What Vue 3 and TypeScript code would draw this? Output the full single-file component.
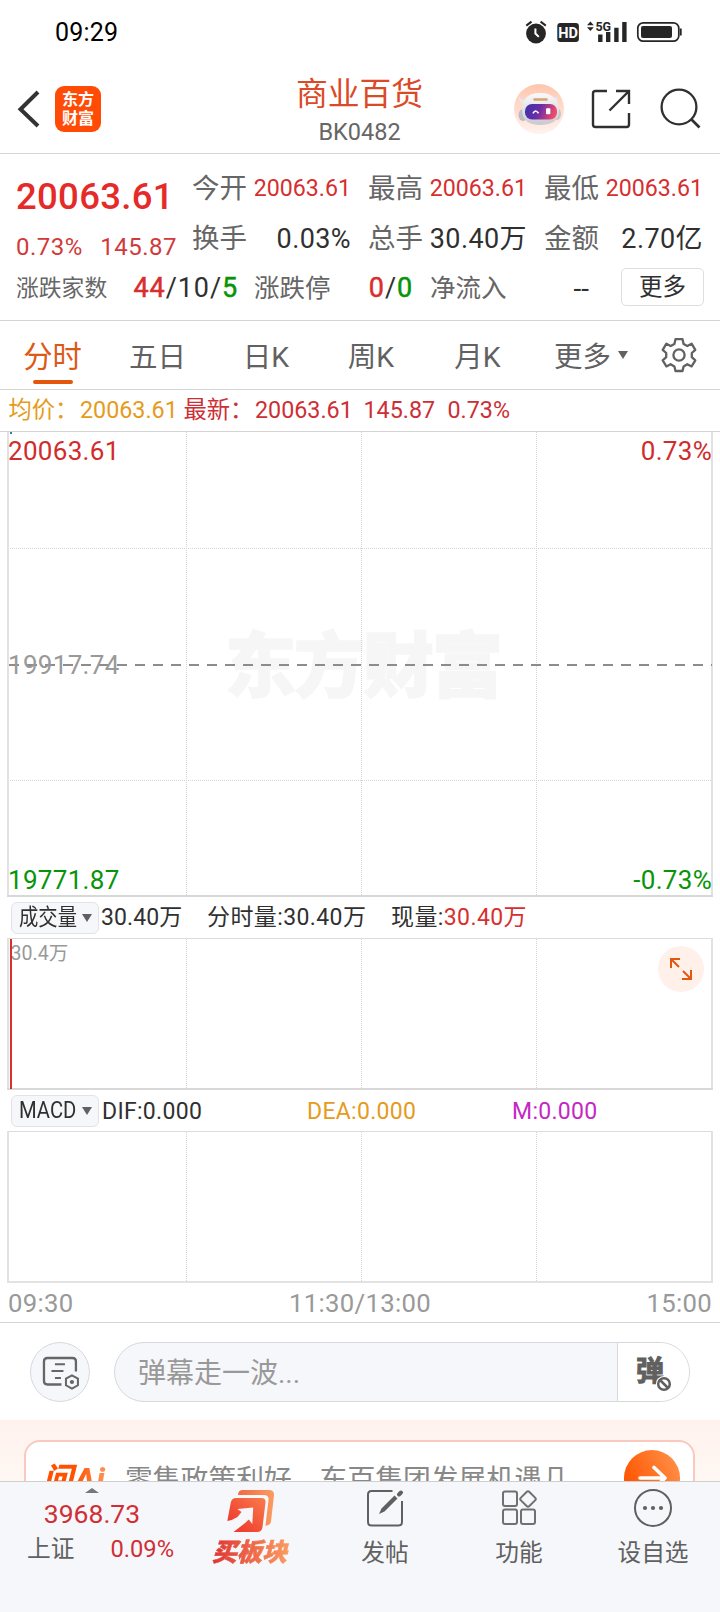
<script setup lang="ts">
interface Cell { label: string; value: string; red?: boolean }

const cells: Cell[] = [
  { label: '今开', value: '20063.61', red: true },
  { label: '最高', value: '20063.61', red: true },
  { label: '最低', value: '20063.61', red: true },
  { label: '换手', value: '0.03%' },
  { label: '总手', value: '30.40万' },
  { label: '金额', value: '2.70亿' },
]
const tabs: string[] = ['分时', '五日', '日K', '周K', '月K']
const columns: number[] = [186.5, 361.5, 536.5]
</script>

<template>
  <div class="page">
    <div class="status">
      <span class="clock">09:29</span>
      <svg class="status-icons" viewBox="520 16 170 32" width="170" height="32">
        <circle cx="536" cy="33.5" r="9.9" fill="#262626" />
        <path d="M526.3 25.6l5.2-4M540.6 21.6l5.2 4" stroke="#262626" stroke-width="2" fill="none" />
        <path d="M535.4 28.5v5l3.4 3.4" stroke="#fff" stroke-width="2" fill="none" />
        <rect x="557.3" y="23" width="21.6" height="19" rx="3" fill="#262626" />
        <text x="568.1" y="38.2" class="hd" text-anchor="middle">HD</text>
        <path d="M587 25.3l3.4-3.8 3.4 3.8zM587 27.2l3.4 3.8 3.4-3.8z" fill="#262626" />
        <text x="595.4" y="30.8" class="five-g">5G</text>
        <path d="M600.3 34.5V42M608.2 32V42M616.4 27.8V42M624.4 22V42" stroke="#262626" stroke-width="4.4" />
        <rect x="637.8" y="22.8" width="41" height="18.4" rx="5.5" fill="none" stroke="#262626" stroke-width="1.7" />
        <rect x="641" y="26" width="31" height="12" rx="2" fill="#262626" />
        <path d="M680.8 28.5v7" stroke="#262626" stroke-width="1.8" />
      </svg>
    </div>

    <header class="header">
      <div class="head-left">
        <svg class="back" viewBox="16 86 26 46" width="26" height="46">
          <path d="M38 92L20.5 109.3 38 126" fill="none" stroke="#333" stroke-width="4" />
        </svg>
        <div class="logo"><span>东方</span><span>财富</span></div>
      </div>
      <div class="title">
        <h1>商业百货</h1>
        <p>BK0482</p>
      </div>
      <svg class="head-icons" viewBox="510 80 210 56" width="210" height="56">
        <defs>
          <linearGradient id="avatarBg" x1="0" y1="0" x2="0" y2="1">
            <stop offset="0" stop-color="#ffc5ad" /><stop offset="1" stop-color="#fff3ee" />
          </linearGradient>
          <linearGradient id="visor" x1="0" y1="0" x2="1" y2="0.2">
            <stop offset="0" stop-color="#3a32a8" /><stop offset=".5" stop-color="#6a2ca8" /><stop offset="1" stop-color="#ee4a6c" />
          </linearGradient>
          <linearGradient id="helmet" x1="0" y1="0" x2="0" y2="1">
            <stop offset="0" stop-color="#fafafc" /><stop offset="1" stop-color="#c9c8d0" />
          </linearGradient>
        </defs>
        <circle cx="539" cy="109" r="25" fill="url(#avatarBg)" />
        <path d="M525 105q-7-2-6-9 2 5 9 4zM553 104q7-2 4-9-1 5-8 4z" fill="#ebe5e8" />
        <ellipse cx="523" cy="115" rx="4.5" ry="6" fill="#bdbac4" />
        <ellipse cx="557" cy="114" rx="4" ry="6" fill="#c9c5cd" />
        <path d="M522 110Q522 93 540 93 558 93 559 110 560 124 541 125 522 125 522 110Z" fill="url(#helmet)" />
        <path d="M534.500 99.500h12" stroke="#d9a070" stroke-width="2.400" stroke-linecap="round" />
        <rect x="525" y="104" width="32" height="15.5" rx="7" fill="url(#visor)" />
        <path d="M533 113.3q2.5-4.5 5.5 0" stroke="#fff" stroke-width="1.6" fill="none" />
        <rect x="546" y="108.3" width="4.4" height="6" rx="1" fill="#fff" />
        <g fill="none" stroke="#303030" stroke-width="2.4">
          <path d="M607 91H595.5Q593 91 593 93.500V124.500Q593 127 595.500 127H626.500Q629 127 629 124.500V113" />
          <path d="M616 91H629V104M628.500 91.500L609.500 110.500" />
          <circle cx="679" cy="107" r="17.400" stroke-width="2.300" />
          <path d="M691.500 119.500L699.500 127.500" stroke-width="2.600" />
        </g>
      </svg>
    </header>

    <section class="quote">
      <div class="quote-top">
        <div class="price">
          <strong>20063.61</strong>
          <div class="delta"><span>0.73%</span><span>145.87</span></div>
        </div>
        <div class="cells">
          <div v-for="c in cells" :key="c.label" class="cell">
            <span class="label">{{ c.label }}</span>
            <span :class="['value', { up: c.red }]">{{ c.value }}</span>
          </div>
        </div>
      </div>
      <div class="quote-row">
        <div class="stat breadth"><span class="small">涨跌家数</span><span class="num"><b class="up">44</b>/10/<b class="down">5</b></span></div>
        <div class="stat limit"><span>涨跌停</span><span class="num"><b class="up">0</b>/<b class="down">0</b></span></div>
        <div class="stat inflow"><span>净流入</span><span class="dash">--</span></div>
        <button class="more">更多</button>
      </div>
    </section>

    <nav class="tabs">
      <span v-for="(t, i) in tabs" :key="t" :class="['tab', { active: i === 0 }]">{{ t }}</span>
      <span class="tab tab-more">更多<i class="caret"></i></span>
      <svg class="gear" viewBox="660 336 38 38" width="38" height="38" fill="none" stroke="#616161" stroke-width="2.3" stroke-linejoin="round">
        <path d="M675.500 339.200h7l1.100 4.700 3.700 2.100 4.300-2.300 3.700 6.100-3.500 3.200v4.200l3.500 3.200-3.700 6-4.300-2.200-3.700 2.200-1.100 4.600h-7l-1.100-4.600-3.700-2.200-4.300 2.200-3.700-6 3.500-3.200v-4.200l-3.500-3.200 3.700-6.100 4.300 2.300 3.700-2.100z" />
        <circle cx="679" cy="355" r="5.600" />
      </svg>
    </nav>

    <div class="legend">
      <span class="avg">均价：</span><span class="avg">20063.61</span>
      <span>最新：</span><span>20063.61</span><span>145.87</span><span>0.73%</span>
    </div>

    <svg class="chart" viewBox="0 432 720 465" width="720" height="465">
      <text x="225" y="691" class="watermark" textLength="278">东方财富</text>
      <path d="M8 548.5H712M8 780.5H712" class="grid" />
      <path v-for="x in columns" :key="x" :d="`M${x} 432V895`" class="grid" />
      <path d="M8 432V896M712 432V896" class="frame" />
      <path d="M7 896H713" class="frame base" />
      <path d="M9 665H712" class="prev-close" />
      <rect x="10" y="432" width="2" height="2" fill="#3f74b0" />
      <text x="8" y="460" class="axis up-text">20063.61</text>
      <text x="712" y="460" class="axis up-text" text-anchor="end">0.73%</text>
      <text x="8" y="674" class="axis mid-text">19917.74</text>
      <text x="8" y="889" class="axis down-text">19771.87</text>
      <text x="712" y="889" class="axis down-text" text-anchor="end">-0.73%</text>
    </svg>

    <div class="indicator volume">
      <button class="chip"><span>成交量</span><i class="caret"></i></button>
      <span>30.40万</span><span>分时量:30.40万</span><span>现量:<em>30.40万</em></span>
    </div>

    <svg class="chart" viewBox="0 938 720 153" width="720" height="153">
      <path d="M7 938.5H713" class="thin" />
      <path v-for="x in columns" :key="x" :d="`M${x} 939V1089`" class="grid" />
      <path d="M8 938V1089M712 938V1089" class="frame" />
      <path d="M7 1089H713" class="frame base" />
      <text x="10.500" y="960" class="peak">30.4万</text>
      <path d="M11 939V1089" stroke="#d9302f" stroke-width="2" />
      <circle cx="681" cy="969" r="23" fill="#fff0e9" />
      <g fill="none" stroke="#e2580f" stroke-width="2">
        <path d="M680 959H671V968M671.500 959.500L679 967" />
        <path d="M682 979H691V970M690.500 978.500L683 971" />
      </g>
    </svg>

    <div class="indicator macd">
      <button class="chip"><span>MACD</span><i class="caret"></i></button>
      <span>DIF:0.000</span><span class="avg">DEA:0.000</span><span class="magenta">M:0.000</span>
    </div>

    <svg class="chart" viewBox="0 1131 720 153" width="720" height="153">
      <path d="M7 1131.500H713" class="thin" />
      <path v-for="x in columns" :key="x" :d="`M${x} 1132V1282`" class="grid" />
      <path d="M8 1131V1282M712 1131V1282" class="frame" />
      <path d="M7 1282H713" class="frame" />
    </svg>

    <div class="times"><span>09:30</span><span>11:30/13:00</span><span>15:00</span></div>

    <div class="danmu">
      <svg viewBox="29 1341 62 62" width="62" height="62">
        <circle cx="60" cy="1372" r="29.500" fill="#f6f7fa" stroke="#d6d8de" />
        <g fill="none" stroke="#666" stroke-width="2.300">
          <path d="M61.500 1384.500H47.500Q44 1384.500 44 1381V1361.500Q44 1358 47.500 1358H72.500Q76 1358 76 1361.500V1371.500" />
          <path d="M55 1364.300H65M51.500 1371H63.500M55 1378H61" stroke-width="2" />
          <path d="M72 1375.300L78 1378.700V1385.300L72 1388.700 66 1385.300V1378.700Z" stroke-width="2" />
        </g>
        <circle cx="72" cy="1382" r="2.100" fill="#666" />
      </svg>
      <div class="pill">
        <span class="placeholder">弹幕走一波...</span>
        <div class="toggle">
          <b>弹</b>
          <svg viewBox="656 1374 18 18" width="18" height="18">
            <circle cx="665" cy="1383" r="8" fill="#fff" />
            <circle cx="665" cy="1383" r="5.800" fill="none" stroke="#606060" stroke-width="2.500" />
            <path d="M661 1379L669 1387" stroke="#606060" stroke-width="2.500" />
          </svg>
        </div>
      </div>
    </div>

    <section class="ask">
      <div class="ask-card">
        <span class="ask-logo">问Ai</span>
        <span class="ask-text">零售政策利好，东百集团发展机遇几</span>
        <svg class="go" viewBox="624 1450 56 56" width="56" height="56">
          <defs>
            <linearGradient id="goFill" x1="0" y1="0.500" x2="1" y2="0">
              <stop offset="0" stop-color="#ff5500" /><stop offset="1" stop-color="#ff9650" />
            </linearGradient>
          </defs>
          <circle cx="652" cy="1478" r="28" fill="url(#goFill)" />
          <path d="M640 1478H665M654 1467.500L665 1478 654 1488.500" fill="none" stroke="#fff" stroke-width="3.600" stroke-linecap="round" stroke-linejoin="round" />
        </svg>
      </div>
    </section>

    <footer class="bottom">
      <div class="index">
        <i class="up-caret"></i>
        <span class="index-value">3968.73</span>
        <div class="index-row"><span>上证</span><span class="index-pct">0.09%</span></div>
      </div>
      <div class="action buy">
        <svg viewBox="226 1489 50 44" width="50" height="44">
          <defs>
            <linearGradient id="buyFront" x1="0" y1="1" x2="1" y2="0">
              <stop offset="0" stop-color="#ee2f28" /><stop offset="1" stop-color="#f87c4c" />
            </linearGradient>
            <linearGradient id="buyBack" x1="0" y1="0" x2="1" y2="0">
              <stop offset="0" stop-color="#f26743" /><stop offset="1" stop-color="#fb9c60" />
            </linearGradient>
          </defs>
          <path d="M238 1495L238.500 1492.500Q239.300 1490 242 1490H269Q274.500 1490 274 1495.500L271 1521.500Q270.500 1525.500 265.500 1525.700L268.500 1500Q269 1495 264 1495Z" fill="url(#buyBack)" />
          <path d="M236 1498H261.500Q266 1498 265.500 1502.500L262.500 1527Q262 1532 257 1532H233.500L244.500 1523.500 248.800 1519.500 252.300 1524 253.200 1507.500 237.500 1509 241.500 1512 237.500 1517Q233 1520 227.300 1521L230.800 1502.500Q231.700 1498 236 1498Z" fill="url(#buyFront)" />
        </svg>
        <span>买板块</span>
      </div>
      <div class="action post">
        <svg viewBox="360 1489 50 44" width="50" height="44" fill="none" stroke="#606060" stroke-width="2">
          <path d="M392.500 1491H371.500Q368 1491 368 1494.500V1522Q368 1525.500 371.500 1525.500H398.500Q402 1525.500 402 1522V1501" />
          <path d="M379 1514L381.500 1508.500 394.500 1495.500 397.500 1498.500 384.500 1511.500Z" fill="#606060" stroke="none" />
          <path d="M399 1494.500L401 1492.500" stroke-width="4" stroke-linecap="round" />
        </svg>
        <span>发帖</span>
      </div>
      <div class="action tools">
        <svg viewBox="494 1489 50 44" width="50" height="44" fill="none" stroke="#707070" stroke-width="2">
          <rect x="503" y="1491.500" width="14" height="14.500" rx="2" />
          <rect x="503" y="1509.500" width="14" height="14.500" rx="2" />
          <rect x="521" y="1509.500" width="14" height="14.500" rx="2" />
          <rect x="522" y="1493" width="12" height="12" rx="2" transform="rotate(45 528 1499)" />
        </svg>
        <span>功能</span>
      </div>
      <div class="action watch">
        <svg viewBox="628 1489 50 44" width="50" height="44">
          <circle cx="653" cy="1508" r="18" fill="none" stroke="#606060" stroke-width="2" />
          <circle cx="645" cy="1508" r="2.100" fill="#606060" /><circle cx="653" cy="1508" r="2.100" fill="#606060" /><circle cx="661" cy="1508" r="2.100" fill="#606060" />
        </svg>
        <span>设自选</span>
      </div>
    </footer>
  </div>
</template>

<style>
html, body { margin: 0; background: #fff; }
</style>

<style scoped>
* { box-sizing: border-box; }
.page { width: 720px; height: 1612px; overflow: hidden; display: flex; flex-direction: column; background: #fff; color: #303030; font-family: Roboto, "Noto Sans CJK SC", sans-serif; font-size: 23px; white-space: nowrap; }
.page > * { flex: none; }
svg { display: block; }
button { font-family: inherit; padding: 0; margin: 0; color: inherit; }
.up { color: #d72f2f; }
.down { color: #089408; }
.avg { color: #e59b1c; }
.magenta { color: #c428c4; }

.status { height: 64px; padding: 16px 30px 0 55px; display: flex; justify-content: space-between; }
.clock { font-size: 25px; line-height: 34px; color: #000; letter-spacing: .2px; }
.hd { font: 700 14.5px Roboto, sans-serif; fill: #fff; }
.five-g { font: 700 12.5px Roboto, sans-serif; fill: #262626; }

.header { height: 90px; border-bottom: 1px solid #d4d4d4; display: grid; grid-template-columns: 210px 299px 211px; }
.head-left { display: flex; padding: 22px 0 0 16px; }
.logo { width: 46px; height: 46px; margin-left: 13px; border-radius: 9px; background: #ff4b05; color: #fff; font: 700 16px/19px "Noto Sans CJK SC", sans-serif; display: flex; flex-direction: column; align-items: center; padding-top: 3px; }
.title { text-align: center; }
.title h1 { margin: 10px 0 0; font-size: 31.800px; line-height: 40px; font-weight: 400; color: #db4a27; }
.title p { margin: 3px 0 0; font-size: 23.500px; line-height: 30px; color: #666; }
.head-icons { margin: 16px 0 0 1px; }

.quote { height: 167px; border-bottom: 1px solid #d4d4d4; }
.quote-top { display: flex; padding-left: 16px; height: 114px; }
.price { width: 176px; padding-top: 20px; }
.price strong { display: block; font-size: 36.500px; line-height: 46px; font-weight: 500; letter-spacing: .3px; color: #e52a2a; }
.delta { display: flex; justify-content: space-between; width: 161px; margin-top: 10px; font-size: 24px; line-height: 34px; letter-spacing: .5px; color: #d13a3a; }
.cells { display: grid; grid-template-columns: 159px 159px 159px; column-gap: 17px; grid-template-rows: 50px 50px; padding-top: 9px; }
.cell { display: flex; justify-content: space-between; align-items: center; line-height: 50px; }
.label { font-size: 27.500px; color: #666; position: relative; top: 1px; }
.value { font-size: 27px; letter-spacing: .4px; padding-top: 1px; }
.value.up { font-size: 23.200px; letter-spacing: 0; padding-top: 0; }
.quote-row { display: flex; height: 38px; line-height: 41px; padding-left: 16px; font-size: 25.500px; color: #666; }
.stat { display: flex; justify-content: space-between; }
.breadth { width: 222px; }
.limit { width: 159px; margin-left: 16px; }
.inflow { width: 159px; margin-left: 17px; }
.small { font-size: 22.800px; }
.num { color: #303030; font-size: 27px; letter-spacing: .9px; }
.num b { font-weight: 400; -webkit-text-stroke: .5px currentColor; }
.dash { color: #303030; font-size: 28px; }
.more { width: 83px; height: 38px; margin-left: 32px; border: 1px solid #dedede; border-radius: 5px; background: #fff; color: #303030; font-size: 23.500px; line-height: 36px; }

.tabs { height: 69px; border-bottom: 1px solid #d4d4d4; display: grid; grid-template-columns: 105px 105px 112px 98px 115px 125px 60px; font-size: 28.500px; color: #616161; }
.tab { position: relative; line-height: 73px; text-align: center; }
.tab.active { color: #dd5a16; font-size: 29.300px; }
.tab.active::after { content: ""; position: absolute; left: 33px; top: 59px; width: 40px; height: 4px; border-radius: 2px; background: #e4560b; }
.tab-more { display: flex; align-items: center; justify-content: flex-start; padding-left: 19px; }
.caret { display: inline-block; width: 0; height: 0; border: 5px solid transparent; border-top: 8px solid #616161; border-bottom: 0; }
.tab-more .caret { margin: 0 0 6px 7px; }
.gear { margin-top: 15px; }

.legend { height: 42px; border-bottom: 1px solid #d4d4d4; padding-left: 8.500px; display: grid; grid-template-columns: 71.500px 103.500px 71.500px 108.500px 84px auto; font-size: 23.300px; line-height: 41px; color: #cd2f35; }

.chart text { font-family: Roboto, "Noto Sans CJK SC", sans-serif; }
.grid { stroke: #d4d4d4; stroke-width: 1; stroke-dasharray: 1 1; fill: none; }
.frame { stroke: #e2e2e2; stroke-width: 2; fill: none; }
.frame.base { stroke: #d8d8d8; }
.thin { stroke: #dcdcdc; stroke-width: 1; }
.prev-close { stroke: #8c8c8c; stroke-width: 1.800; stroke-dasharray: 10 8; }
.axis { font-size: 26px; letter-spacing: .3px; }
.up-text { fill: #d02c2c; }
.mid-text { fill: #999; }
.down-text { fill: #089408; }
.peak { font-size: 19.600px; fill: #999; }
.chart .watermark { font-family: "Noto Sans CJK SC", sans-serif; font-weight: 900; font-size: 71px; fill: #f6f6f6; stroke: #f6f6f6; stroke-width: 1.500; }

.indicator { display: grid; line-height: 42px; padding-left: 11px; align-items: center; }
.volume { height: 41px; grid-template-columns: 90px 106px 184px auto; letter-spacing: .4px; }
.volume > span:nth-child(2) { letter-spacing: .1px; }
.macd { height: 40px; line-height: 37px; grid-template-columns: 91px 205px 205px auto; letter-spacing: .3px; }
.indicator em { font-style: normal; color: #d72f2f; }
.chip { width: 88px; height: 32px; border: 1px solid #e2e3e8; border-radius: 6px; background: #f6f7fa; font-size: 23px; line-height: 30px; display: flex; align-items: center; justify-content: space-between; padding: 0 6px 0 7px; }
.chip span { transform: scaleX(.84); transform-origin: 0 50%; width: 60px; text-align: left; }
.macd .chip { margin-bottom: 1px; }
.macd .chip span { transform: scaleX(.88); }

.times { height: 39px; border-bottom: 1px solid #d4d4d4; display: flex; justify-content: space-between; padding: 0 8px; font-size: 25.700px; line-height: 38px; color: #999; letter-spacing: .3px; }

.danmu { height: 97px; padding: 18px 30px 0 29px; display: flex; }
.pill { width: 577px; height: 60px; margin: 1px 0 0 23px; border: 1px solid #d6d8de; border-radius: 30px; background: #f6f7fa; overflow: hidden; display: flex; justify-content: space-between; }
.placeholder { padding-left: 23px; font-size: 28px; line-height: 62px; color: #999; }
.toggle { width: 72px; background: #fff; border-left: 1px solid #d6d8de; position: relative; }
.toggle b { position: absolute; left: 18px; top: 9px; font-size: 28px; line-height: 40px; color: #606060; -webkit-text-stroke: 1px #606060; }
.toggle svg { position: absolute; left: 37px; top: 32px; }

.ask { height: 61px; padding: 20px 25px 0 24px; background: linear-gradient(#fff2ee, #fff8f2); overflow: hidden; }
.ask-card { height: 90px; border: 2px solid #fac8bc; border-radius: 16px; background: #fff; display: flex; padding-left: 16px; }
.ask-logo { width: 67px; margin-right: 17px; padding-left: 1px; font-size: 30px; letter-spacing: 2px; line-height: 73px; font-weight: 900; font-style: italic; background: linear-gradient(90deg, #ff5200 50%, #ff9a60); -webkit-background-clip: text; background-clip: text; color: transparent; }
.ask-text { width: 498px; margin-left: -1px; margin-right: 1px; font-size: 27.800px; line-height: 75px; color: #888; }
.go { margin-top: 8px; }

.bottom { height: 131px; border-top: 1px solid #cfcfcf; background: #f6f7fa; display: flex; color: #606060; }
.index { width: 184px; position: relative; text-align: center; padding-top: 17px; color: #d02f36; }
.up-caret { position: absolute; left: 85px; top: 6px; border: 7px solid transparent; border-bottom: 5px solid #777; border-top: 0; }
.index-value { display: block; font-size: 26.500px; line-height: 30px; }
.index-row { display: flex; justify-content: space-between; padding: 0 10px 0 27px; line-height: 30px; margin-top: 5px; font-size: 23.700px; }
.index-row span:first-child { color: #606060; }
.action { width: 134px; display: flex; flex-direction: column; align-items: center; padding-top: 7px; font-size: 23.700px; line-height: 30px; }
.action > span { margin-top: 5px; }
.buy > span { font-weight: 900; font-size: 25px; font-style: italic; -webkit-text-stroke: .6px transparent; padding: 0 3px; margin-right: 3px; background: linear-gradient(90deg, #dd3030, #fb9c60); -webkit-background-clip: text; background-clip: text; color: transparent; }
</style>
